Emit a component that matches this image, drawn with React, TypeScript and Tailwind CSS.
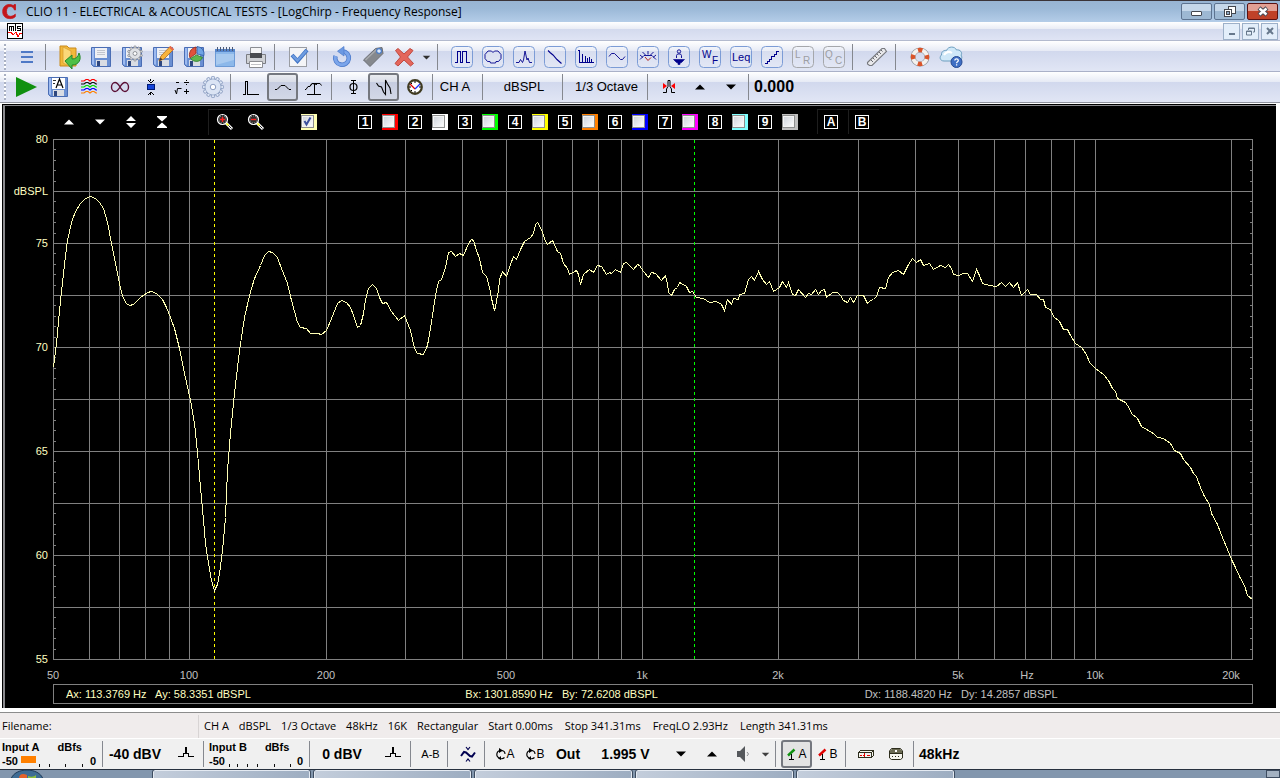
import React from "react";

type Kids = { children?: React.ReactNode };

const BAR =
  "flex items-center shrink-0 overflow-hidden border-b bg-[linear-gradient(180deg,#ffffff_0px,#e6eaf5_10px,#d1d8ed_10px,#e1e6f5_30px)]";

function Tool({ label, pressed, children }: Kids & { label: string; pressed?: boolean }) {
  return (
    <button
      type="button"
      aria-label={label}
      aria-pressed={pressed}
      className={
        "flex h-7 w-[31px] shrink-0 items-center justify-center rounded-[3px] " +
        (pressed ? "border-2 border-[#75787f] bg-black/5" : "")
      }
    >
      {children}
    </button>
  );
}

function Sep() {
  return <span className="ml-[2px] mr-[5px] h-[26px] w-px shrink-0 bg-[#85888f]" />;
}

function WideSep() {
  return <span className="ml-[3px] mr-2 h-[26px] w-px shrink-0 bg-[#85888f]" />;
}

function Grip() {
  return (
    <span className="mr-[5px] ml-1 h-[26px] w-[2px] shrink-0 bg-[repeating-linear-gradient(180deg,#a9b0c2_0px,#a9b0c2_2px,#ffffff_2px,#ffffff_4px)]" />
  );
}

function Art({ s = 24, crisp, children }: Kids & { s?: number; crisp?: boolean }) {
  return (
    <svg
      width={s}
      height={s}
      viewBox={`0 0 ${s} ${s}`}
      fill="none"
      stroke="none"
      className="shrink-0"
      shapeRendering={crisp ? "crispEdges" : "auto"}
      aria-hidden="true"
    >
      {children}
    </svg>
  );
}

function Boxed({ children, off }: Kids & { off?: boolean }) {
  return (
    <Art s={22}>
      <rect x="0.5" y="0.5" width="21" height="21" rx="4" fill="#ffffff" fillOpacity="0.15" stroke={off ? "#a5a7ab" : "#7c9cd6"} />
      <g stroke={off ? "#a5a7ab" : "#00008c"}>{children}</g>
    </Art>
  );
}

function Floppy({ children }: Kids) {
  return (
    <Art>
      <path d="M2.500 2.500h19v19h-17l-2-2z" fill="#6a8fd2" stroke="#4a6db4" />
      <path d="M3 3h2v17l-2-1z" fill="#9dbaf0" />
      <rect x="6" y="3" width="12" height="10" fill="#eff0f4" />
      <path d="M8 5.500h8M8 7.500h8M8 9.500h8" stroke="#c3c6ce" />
      <rect x="7" y="15" width="11" height="6" fill="#d9dce3" />
      <rect x="8" y="16" width="3" height="5" fill="#2f477e" />
      {children}
    </Art>
  );
}

function Cog({ cx, cy, r, n, fill, line }: { cx: number; cy: number; r: number; n: number; fill: string; line: string }) {
  const teeth = Array.from({ length: n }, (_, i) => (i * 360) / n);
  return (
    <g>
      {teeth.map((a) => (
        <rect
          key={a}
          x={cx - r * 0.15}
          y={cy - r}
          width={r * 0.3}
          height={r * 0.5}
          rx="0.8"
          fill={fill}
          stroke={line}
          strokeWidth="0.8"
          transform={`rotate(${a} ${cx} ${cy})`}
        />
      ))}
      <circle cx={cx} cy={cy} r={r * 0.76} fill={fill} stroke={line} strokeWidth="0.6" />
      <circle cx={cx} cy={cy} r={r * 0.26} fill="#ffffff" stroke={line} strokeWidth="0.9" />
    </g>
  );
}

function Up({ fill = "#000000" }: { fill?: string }) {
  return (
    <Art s={12}>
      <path d="M1 8.500L6 3.500l5 5z" fill={fill} />
    </Art>
  );
}

function Down({ fill = "#000000", s = 12 }: { fill?: string; s?: number }) {
  return (
    <svg width={s} height={s} viewBox="0 0 12 12" aria-hidden="true" className="shrink-0">
      <path d="M1 3.500L6 8.500l5-5z" fill={fill} />
    </svg>
  );
}

function TitleBar() {
  return (
    <header className="flex h-[22px] shrink-0 items-center border-t border-[#3a3338] bg-[linear-gradient(180deg,#98b4d3_0px,#9cb9d8_8px,#b4cde8_21px)] pr-[2px]">
      <svg width="20" height="20" viewBox="0 0 20 20" className="shrink-0" aria-hidden="true">
        <path d="M15.500 2.500v5.500h-1c-.8-2.400-2.300-3.500-4.200-3.500C7.700 4.500 6.500 6.300 6.500 9.400c0 3.200 1.500 4.900 4 4.900 1.800 0 3.400-.7 4.800-2.200v2.600c-1.400 1.300-3.200 1.900-5.400 1.900-4.400 0-7.200-2.700-7.200-7 0-4.200 2.700-7.100 6.700-7.100 1.500 0 2.800.4 3.900 1.100l.9-1.100z" fill="#c4151b" stroke="#c4151b" strokeWidth="0.8" />
      </svg>
      <h1 className="ml-[6px] min-w-0 flex-1 truncate font-['Open_Sans','Noto_Sans',sans-serif] text-xs leading-5 text-black">
        CLIO 11 - ELECTRICAL &amp; ACOUSTICAL TESTS - [LogChirp - Frequency Response]
      </h1>
      <div className="flex gap-[2px]">
        <button type="button" aria-label="Minimize" className="flex h-[17px] w-[31px] items-center justify-center rounded-[2px] border border-[#5d7390] bg-[linear-gradient(180deg,#c5d7ea_50%,#9db8d3_50%)]">
          <span className="mt-1 h-[5px] w-[11px] rounded-[1px] border border-[#44474f] bg-white" />
        </button>
        <button type="button" aria-label="Restore" className="flex h-[17px] w-[31px] items-center justify-center rounded-[2px] border border-[#5d7390] bg-[linear-gradient(180deg,#c5d7ea_50%,#9db8d3_50%)]">
          <svg width="12" height="12" viewBox="0 0 12 12" fill="#ffffff" stroke="#44474f" aria-hidden="true">
            <rect x="4.500" y="0.500" width="7" height="7" />
            <rect x="0.500" y="3.500" width="7" height="7" />
            <rect x="2.500" y="5.500" width="3" height="3" fill="#8fa8c4" />
          </svg>
        </button>
        <button type="button" aria-label="Close" className="flex h-[17px] w-[31px] items-center justify-center rounded-[2px] border border-[#5a1212] bg-[linear-gradient(180deg,#e2a094_50%,#bf4128_50%)]">
          <svg width="12" height="11" viewBox="0 0 12 11" aria-hidden="true">
            <path d="M2 2l8 7M10 2L2 9" stroke="#4b4b55" strokeWidth="4.400" />
            <path d="M2.500 2.500l7 6M9.500 2.500l-7 6" stroke="#ffffff" strokeWidth="2.400" />
          </svg>
        </button>
      </div>
    </header>
  );
}

function MenuBar() {
  const box = "flex h-[17px] w-[17px] items-center justify-center border border-[#9db0c8] bg-[#e3eefa]";
  return (
    <nav className="flex h-[19px] shrink-0 items-center justify-between border-b border-[#b3bace] bg-[linear-gradient(180deg,#ffffff_0px,#e9ecf5_7px,#d3daee_7px,#dfe4f4_18px)] pr-[2px] pl-[7px]">
      <svg width="16" height="16" viewBox="0 0 16 16" shapeRendering="crispEdges" aria-hidden="true">
        <rect x="0.500" y="0.500" width="15" height="15" fill="#ffffff" stroke="#000000" />
        <path d="M2.500 8V3.500h2V8M4.500 3.500h2V8M8.500 1v7M14 3.500h-3.500v2h3v2H10" stroke="#000000" fill="none" />
        <path d="M1 9.500h3l2 2 3-2 2 4 2-3h2" stroke="#ff0000" fill="none" />
      </svg>
      <div className="flex gap-[2px]">
        <button type="button" aria-label="Minimize document" className={box}>
          <span className="mt-[6px] h-[2px] w-[6px] bg-[#67788c]" />
        </button>
        <button type="button" aria-label="Restore document" className={box}>
          <svg width="9" height="9" viewBox="0 0 9 9" fill="none" stroke="#67788c" aria-hidden="true">
            <path d="M2.500 3V1h6v4H7M2.500 1.500h6" />
            <path d="M0.500 4h5v4h-5zM0.500 4.500h5" />
          </svg>
        </button>
        <button type="button" aria-label="Close document" className={box}>
          <svg width="8" height="8" viewBox="0 0 8 8" stroke="#67788c" strokeWidth="2" aria-hidden="true">
            <path d="M1 1l6 6M7 1L1 7" />
          </svg>
        </button>
      </div>
    </nav>
  );
}

const SMALL = { fontFamily: "Liberation Sans, Arial, sans-serif", stroke: "none" };

function MainToolbar() {
  return (
    <div role="toolbar" aria-label="Main" className={BAR + " h-[31px] border-[#aab1c8] pt-[2px]"}>
      <Grip />
      <Tool label="Menu">
        <Art s={14}>
          <path d="M1 2h12M1 7h12M1 12h12" stroke="#4f79c6" strokeWidth="2" />
        </Art>
      </Tool>
      <WideSep />
      <Tool label="Open">
        <Art>
          <path d="M2 1h7l2 2h7v18H2z" fill="#f2b93b" stroke="#c98a1d" />
          <path d="M5 2l8 4v16l-8-4z" fill="#fbd879" stroke="#d69a2b" strokeWidth="0.700" />
          <path d="M7 16l7-6v4c4 0 6-2 7-6 3 6 0 12-7 12v4z" fill="#4fc048" stroke="#22882a" />
        </Art>
      </Tool>
      <Tool label="Save"><Floppy /></Tool>
      <Tool label="Save settings">
        <Floppy><Cog cx={15} cy={8.5} r={7.5} n={10} fill="#dfe1e5" line="#85888f" /></Floppy>
      </Tool>
      <Tool label="Save as">
        <Floppy>
          <path d="M10 11L19 1.500l3.500 3L13 14l-5 2z" fill="#f8b33c" stroke="#b0691a" strokeWidth="0.800" />
          <path d="M18 2.500l1.500-1.500 3.500 3-1.500 2z" fill="#e5694b" />
          <path d="M8 16l1.500-3.500 2 2z" fill="#4a3a2a" />
        </Floppy>
      </Tool>
      <Tool label="Export">
        <Floppy>
          <path d="M15 9V1.500a7.500 7.500 0 0 1 7 9z" fill="#6fa3e4" stroke="#2d5ca6" strokeWidth="0.800" />
          <path d="M14 8.500L8 13C6 8 9 3 14 2z" fill="#e0523c" stroke="#912a1c" strokeWidth="0.800" />
          <path d="M14.500 10l6 2.500c-2 5-9 5-12 1z" fill="#5fb64f" stroke="#2c7a2a" strokeWidth="0.800" />
        </Floppy>
      </Tool>
      <Tool label="Notes">
        <Art>
          <path d="M2.500 4.500h19v17h-19z" fill="#8cb8ea" stroke="#6c9ad6" />
          <path d="M2 4h20v3H2z" fill="#5585cb" />
          <path d="M4.500 2v4M7.500 2v4M10.500 2v4M13.500 2v4M16.500 2v4M19.500 2v4" stroke="#4b5a78" />
          <path d="M3 9h18v6L3 20z" fill="#ffffff" opacity="0.250" />
        </Art>
      </Tool>
      <Tool label="Print">
        <Art>
          <path d="M6.500 2.500h11v7h-11z" fill="#f5f5f6" stroke="#8b8d92" />
          <path d="M2.500 9.500h19v9h-19z" fill="#cfd1d5" stroke="#7b7d83" />
          <path d="M6 8h12v5H6z" fill="#4a4c50" />
          <path d="M5.500 16.500h13v6h-13z" fill="#ffffff" stroke="#8b8d92" />
          <path d="M7 19.500h10" stroke="#c2c3c7" />
        </Art>
      </Tool>
      <WideSep />
      <Tool label="Options">
        <Art>
          <rect x="2.500" y="2.500" width="17" height="19" fill="#f4f5f7" stroke="#9a9da3" />
          <path d="M5 10l5.500 6L20 5" stroke="#3f73c4" strokeWidth="4" />
          <path d="M5.500 10.500l5 5L19.500 5.500" stroke="#6f9de0" strokeWidth="2.400" />
        </Art>
      </Tool>
      <WideSep />
      <Tool label="Reload">
        <Art s={22}>
          <path d="M4.500 10a6.800 6.800 0 1 0 7-4.800" stroke="#4e7ccc" strokeWidth="4.600" />
          <path d="M4.500 10a6.800 6.800 0 1 0 7-4.800" stroke="#7ba5ea" strokeWidth="3" />
          <path d="M13 0.500v9.500L6.500 5.200z" fill="#6c99e2" stroke="#4e7ccc" strokeWidth="0.700" />
        </Art>
      </Tool>
      <Tool label="Tag">
        <Art>
          <path d="M2.500 15L14.500 3.500l6.500-1 1 6L9 21.500z" fill="#85888d" stroke="#6b6e74" />
          <path d="M4.500 15L15.500 4.500" stroke="#a8aaae" strokeWidth="1.500" />
          <circle cx="18" cy="6" r="2.400" fill="#dfeafb" stroke="#4a7cc7" strokeWidth="1.200" />
        </Art>
      </Tool>
      <Tool label="Delete">
        <Art s={22}>
          <path d="M2.500 4.500L5 2.500 11 8l6-5.500 3 2L14.500 11l6 6.500-3 2.500-6.500-6-6 6L2 17.500 7.500 11z" fill="#e4665c" stroke="#c04a40" />
        </Art>
      </Tool>
      <button type="button" aria-label="More" className="flex h-7 w-[15px] shrink-0 items-center justify-center"><Down s={9} fill="#303030" /></button>
      <WideSep />
      <Tool label="MLS"><Boxed><path d="M4 16.500h2.500v-11h3v11h2v-11h4v11h3" shapeRendering="crispEdges" /></Boxed></Tool>
      <Tool label="Polar"><Boxed><path d="M11 6.500l1.500-1.500h3.500l3 3.500v4l-2.500 3h-2.500l-.5 1.500h-5l-.5-1.500H5.500L3 12.500v-4L6 5h3.500z" strokeWidth="0.900" strokeLinejoin="round" /></Boxed></Tool>
      <Tool label="FFT"><Boxed><path d="M3 16.500h3l1.500-3 2 3 1-2.500 1.500-9 2 9 1-2 1.500 4.500h2.500" strokeWidth="0.900" /></Boxed></Tool>
      <Tool label="Decay"><Boxed><path d="M4 4.500l2 2 3 2.500 4 4.500 4.500 4" strokeWidth="1.100" /></Boxed></Tool>
      <Tool label="Distortion"><Boxed><path d="M3 4.500h1.500v12H19M7.500 8v8M10.500 10v6M12.500 12v4M14.500 11v5M16.500 13v3" shapeRendering="crispEdges" /></Boxed></Tool>
      <Tool label="Sine"><Boxed><path d="M3 10.500l2.500-3h3l6 6h2l2.500-3" strokeWidth="0.900" /></Boxed></Tool>
      <Tool label="Meter">
        <Boxed>
          <path d="M3 13.500l4-4h8l4 4M5.500 6l3 3M11 5v3.500M16.500 6l-3 3M3 9l3 2.500M19 9l-3 2.500" strokeWidth="0.900" />
          <path d="M11 14.500L8 11M11 14.500l3-3" stroke="#b02020" />
        </Boxed>
      </Tool>
      <Tool label="Loudspeaker">
        <Boxed>
          <circle cx="11" cy="5.500" r="1.700" strokeWidth="0.900" />
          <path d="M8.500 12V9.500l1-1.500h3l1 1.500V12" strokeWidth="0.900" />
          <path d="M5.500 13.500h11l-3 3-1.500.5v1.500h-2V17L8.500 16.500z" fill="#00008c" strokeWidth="0.600" />
        </Boxed>
      </Tool>
      <Tool label="Wow and flutter"><Boxed><text x="3" y="12" fontSize="10" fill="#00008c" style={SMALL}>W</text><text x="13" y="18" fontSize="10" fill="#00008c" style={SMALL}>F</text></Boxed></Tool>
      <Tool label="Level"><Boxed><text x="2" y="15" fontSize="11" fill="#00008c" style={SMALL}>Leq</text></Boxed></Tool>
      <Tool label="Linearity"><Boxed><path d="M4 17.500h2.500v-2h2v-2h2v-3h3v-2h2v-3H18" shapeRendering="crispEdges" /></Boxed></Tool>
      <Tool label="Left right"><Boxed off><text x="3" y="12" fontSize="10" fill="#9c9ea3" style={SMALL}>L</text><text x="11" y="18" fontSize="10" fill="#9c9ea3" style={SMALL}>R</text></Boxed></Tool>
      <Tool label="Quality control"><Boxed off><text x="2" y="12" fontSize="10" fill="#9c9ea3" style={SMALL}>Q</text><text x="12" y="18" fontSize="10" fill="#9c9ea3" style={SMALL}>C</text></Boxed></Tool>
      <WideSep />
      <Tool label="Ruler">
        <Art>
          <path d="M2.500 17.500L17 3.500h2.500l2 3L7 20.500H4.500l-2-1.500z" fill="#e9e9ec" stroke="#77797e" strokeWidth="1.100" />
          <path d="M6 15l2 2M8 13l1.500 1.500M10 11l2 2M12 9l1.500 1.500M14 7l2 2M16 5l1.500 1.500" stroke="#67696e" />
        </Art>
      </Tool>
      <WideSep />
      <Tool label="Help">
        <Art s={22}>
          <circle cx="11" cy="11" r="7" stroke="#8c8f95" strokeWidth="5" />
          <circle cx="11" cy="11" r="7" stroke="#f3f1ee" strokeWidth="4" />
          <circle cx="11" cy="11" r="7" stroke="#d9542a" strokeWidth="4.400" strokeDasharray="4.400 6.595" strokeDashoffset="2.200" />
        </Art>
      </Tool>
      <Tool label="Online help">
        <Art>
          <path d="M5 16C1 16 0 12 2.500 10 2 6 6 5 7.500 5.500 9 1 16 1 17.500 5 21 4 24 8 22 10c2 3 0 6-3 6z" fill="#cfe8f8" stroke="#6e9fc0" />
          <path d="M5 10c2-3 5-4 8-2" stroke="#ffffff" strokeWidth="2" />
          <circle cx="17.500" cy="17" r="5.500" fill="#3f6fc4" stroke="#274b92" />
          <path d="M15.800 15.500c0-2.300 3.500-2.300 3.500 0 0 1.400-1.700 1.300-1.700 2.700M17.600 19.300v1.200" stroke="#ffffff" strokeWidth="1.300" />
        </Art>
      </Tool>
    </div>
  );
}

const waves = ["#ff0000", "#101010", "#00e000", "#0000ff", "#ff8000"];

function MeasureToolbar() {
  const txt = "h-7 shrink-0 text-center text-[13px] leading-7 whitespace-nowrap font-['Liberation_Sans',Arial,sans-serif] text-black";
  return (
    <div role="toolbar" aria-label="Measurement" className={BAR + " h-[31px] border-[#8f939e]"}>
      <Grip />
      <Tool label="Go"><Art><path d="M1 2l21 10-21 10z" fill="#109010" /></Art></Tool>
      <Tool label="Autosave">
        <Floppy>
          <rect x="6" y="3" width="13" height="11" fill="#ffffff" />
          <path d="M7 5.500h3M7 8.500h2" stroke="#303030" />
          <path d="M10 13l3.500-9L17 13M11.200 10h4.600" stroke="#000000" strokeWidth="1.200" />
        </Floppy>
      </Tool>
      <Tool label="Overlays">
        <Art s={18}>
          {waves.map((c, i) => (
            <path key={c} d={`M1 ${3 + i * 3}h3l2-1.5h2l2 1.5 2-1.5h2l2 1.500h1`} stroke={c} strokeWidth="1.200" />
          ))}
        </Art>
      </Tool>
      <Tool label="Loop">
        <Art s={20}>
          <path d="M10 10C8 6.500 6.500 5.500 5 5.500A3.500 4.500 0 0 0 5 14.500c1.500 0 3-1 5-4.500s3.500-4.500 5-4.500a3.500 4.500 0 0 1 0 9C13.500 14.500 12 13.500 10 10z" stroke="#5a0f34" strokeWidth="1.400" />
        </Art>
      </Tool>
      <Tool label="Center cursor">
        <Art s={18} crisp>
          <path d="M6 2l3 3 3-3M6 17l3-3 3 3M8.500 1v2M8.500 15v2" stroke="#000000" />
          <rect x="5.500" y="6.500" width="7" height="5" fill="#1544d8" stroke="#001a78" />
        </Art>
      </Tool>
      <Tool label="Math">
        <Art s={18}>
          <path d="M3 4.500h3M11 4.500h5M13.500 2v1M13.500 6v1M2 12l1.500 4 1-5.500h4M11 13.500h5M13.500 11v5" stroke="#000000" />
        </Art>
      </Tool>
      <Tool label="Settings"><Art><Cog cx={12} cy={12} r={10.5} n={12} fill="#dbe4f4" line="#8295bb" /></Art></Tool>
      <Sep />
      <Tool label="Impulse"><Art s={20} crisp><path d="M1 17.500h2.500v-13h2v13H17" stroke="#000000" /></Art></Tool>
      <Tool label="Frequency" pressed><Art s={20}><path d="M2 12.500h2l4-4h4l4 4h2" stroke="#000000" /></Art></Tool>
      <Tool label="Time"><Art s={20}><path d="M1 12.500h1l2-3h2l2-3h8l1.500 2M10.500 6v11M3 17.500h14M6 9l2-2.500 5 1" stroke="#000000" /></Art></Tool>
      <Sep />
      <Tool label="Phase"><Art s={18}><path d="M9.500 2v14M7 2.500h5M7 15.500h5" stroke="#000000" /><ellipse cx="9.500" cy="9" rx="3.500" ry="3.500" stroke="#000000" strokeWidth="1.200" /></Art></Tool>
      <Tool label="Step" pressed><Art s={20}><path d="M2.500 6l2 3 3 1 2 5 2 2.500V3l2 4 2.500 4 1 6" stroke="#000000" strokeWidth="1.100" /></Art></Tool>
      <Tool label="Clock">
        <Art s={18}>
          <circle cx="9" cy="9" r="6.800" fill="#ffffff" stroke="#3f3a20" strokeWidth="2.200" />
          <path d="M9 3v2M9 13v2M3 9h2M13 9h2M5 5l1 1M5 13l1-1" stroke="#000000" />
          <path d="M4 6l5 5" stroke="#e00000" strokeWidth="1.200" />
          <path d="M9 11l5-5" stroke="#1b2fff" strokeWidth="1.200" />
        </Art>
      </Tool>
      <Sep />
      <button type="button" className={txt + " w-[34px] mr-2"}>CH A</button>
      <Sep />
      <button type="button" className={txt + " w-[72px]"}>dBSPL</button>
      <Sep />
      <button type="button" className={txt + " w-[77px]"}>1/3 Octave</button>
      <Sep />
      <Tool label="Gate">
        <Art s={18}>
          <path d="M3 14.500h3.500V11L8 8.500v-6h2v6l1.500 2.500v3.500H15" stroke="#000000" />
          <path d="M3 5l4 3-4 3zM15 5l-4 3 4 3z" fill="#ff0000" />
        </Art>
      </Tool>
      <Tool label="Increase"><Up /></Tool>
      <Tool label="Decrease"><Down /></Tool>
      <Sep />
      <output className="font-['Liberation_Sans',Arial,sans-serif] text-base leading-7 font-bold text-black">0.000</output>
    </div>
  );
}

const overlays = [
  "bg-[#ff0000]",
  "bg-[#ffffff]",
  "bg-[#00ff00]",
  "bg-[#ffff00]",
  "bg-[#ff8000]",
  "bg-[#0000ff]",
  "bg-[#ff00ff]",
  "bg-[#80ffff]",
  "bg-[#c0c0c0]",
];

const checkStyle =
  "block size-[13px] appearance-none border border-[#8e8f8f] bg-[linear-gradient(135deg,#cdd2da,#ffffff)] shadow-[inset_0_0_0_1px_#f4f4f4]";
const keyStyle =
  "flex size-[14px] items-center justify-center border border-white font-['Liberation_Sans',Arial,sans-serif] text-xs leading-3 font-bold text-white";

function Lens({ sign }: { sign: string }) {
  return (
    <Art s={18}>
      <path d="M10 10l6 6" stroke="#ffffff" strokeWidth="3" />
      <path d="M10.500 10.500l5 5" stroke="#202020" strokeWidth="1" />
      <path d="M9.500 9.500l3 3" stroke="#ffff00" strokeWidth="1.400" />
      <circle cx="6.500" cy="6.500" r="5" fill="#000000" stroke="#ffffff" strokeWidth="1.200" />
      <circle cx="6.500" cy="6.500" r="3.600" fill="#303030" stroke="#c8c8c8" strokeWidth="0.800" strokeDasharray="1 1" />
      <path d={sign} stroke="#ff2020" strokeWidth="1.400" />
    </Art>
  );
}

function PlotControls() {
  return (
    <div className="flex h-[33px] shrink-0 items-center pb-[2px] pl-12">
      <Tool label="Shift up"><Up fill="#ffffff" /></Tool>
      <Tool label="Shift down"><Down fill="#ffffff" /></Tool>
      <Tool label="Expand"><Art s={12}><path d="M1 5l5-5 5 5zM1 7l5 5 5-5z" fill="#ffffff" /></Art></Tool>
      <Tool label="Compress"><Art s={12}><path d="M1 0h10v1L6 5.500 1 1zM1 12h10v-1L6 6.500 1 11z" fill="#ffffff" /></Art></Tool>
      <span className="w-[31px]" />
      <span className="flex h-[26px] items-center border-t border-l border-[#1e1e1e]"><Tool label="Zoom in"><Lens sign="M4 6.500h5M6.500 4v5" /></Tool></span>
      <Tool label="Zoom out"><Lens sign="M4 6.500h5" /></Tool>
      <span className="relative ml-[30px] block size-4 bg-[#ffffb4] pt-px">
        <input type="checkbox" defaultChecked aria-label="Main curve" className={checkStyle} />
        <svg width="11" height="11" viewBox="0 0 11 11" className="pointer-events-none absolute top-[2px] left-px" aria-hidden="true">
          <path d="M2.500 5l2 3.500L8.500 1.500" stroke="#3b4f9c" strokeWidth="2" fill="none" />
        </svg>
      </span>
      <div className="ml-[41px] flex gap-[10px]">
        {overlays.map((bg, i) => (
          <div key={bg} className="flex items-center gap-[10px]">
            <label htmlFor={`overlay-${i + 1}`} className={keyStyle}>{i + 1}</label>
            <span className={"block size-4 pt-px " + bg}>
              <input id={`overlay-${i + 1}`} type="checkbox" className={checkStyle} />
            </span>
          </div>
        ))}
      </div>
      <div className="ml-[19px] flex">
        {["A", "B"].map((k) => (
          <button key={k} type="button" className="flex h-[25px] w-[31px] items-center border-t border-l border-[#1e1e1e] pl-[6px]">
            <span className={keyStyle}>{k}</span>
          </button>
        ))}
      </div>
    </div>
  );
}

const trace =
  "0,228 3,204 7,161 12,116 14,101 18,83 22,72 27,64 32,59 37,57 42,59 46,63 50,69 54,83 58,104 64,134 67,149 70,159 73,164 76,166 80,165 87,158 94,153 98,152 103,154 109,160 113,168 117,178 121,189 126,209 131,234 137,261 141,284 144,313 147,348 150,381 152,404 155,424 158,441 160,448 161,451 164,445 166,434 169,411 172,378 174,331 177,294 181,254 186,211 191,178 196,156 201,139 207,126 211,116 215,112 219,113 224,118 228,129 234,144 238,161 244,183 247,188 253,189 257,194 264,194 268,195 273,191 278,179 284,164 288,161 293,163 297,168 300,176 304,188 307,186 310,174 312,160 315,149 319,145 323,149 326,158 329,164 333,163 338,172 345,181 351,176 353,181 357,191 361,209 364,214 370,215 374,206 377,189 382,156 385,142 388,140 392,128 395,113 398,112 402,117 406,114 410,116 415,104 418,100 420,101 423,111 426,119 429,133 433,137 436,148 438,159 441,171 442,167 445,151 446,140 449,132 453,137 456,128 460,117 463,120 467,110 471,102 477,98 480,94 482,85 484,83 486,86 489,93 492,102 494,105 499,101 504,112 507,114 510,124 514,129 516,135 523,131 525,135 527,145 530,135 536,130 540,133 544,126 548,127 553,135 556,133 558,134 562,130 567,133 570,124 573,123 577,127 580,130 584,125 586,126 590,132 595,138 598,133 602,134 608,141 612,136 614,144 615,153 618,156 621,150 624,148 626,143 633,147 636,153 639,152 643,158 650,159 656,163 663,162 668,165 671,171 674,160 678,165 680,159 685,160 686,155 691,154 695,140 698,137 701,141 705,132 709,140 713,145 716,142 720,152 726,148 729,142 733,148 735,143 739,155 742,156 745,150 752,158 755,154 758,155 762,150 765,155 768,151 771,150 773,158 779,153 784,153 787,156 790,161 794,163 797,158 800,163 804,156 810,156 814,164 817,161 820,160 823,157 826,148 832,149 835,138 839,133 845,131 850,135 855,125 859,119 863,123 867,120 870,126 876,124 880,130 887,126 892,128 895,125 898,129 900,135 905,136 910,134 914,134 919,142 923,130 926,136 929,144 936,146 943,147 948,143 952,147 956,143 960,148 964,143 968,156 974,150 977,155 983,155 987,160 990,160 992,168 997,170 1000,177 1006,182 1010,190 1014,190 1017,196 1022,204 1028,208 1033,215 1036,223 1042,229 1050,235 1055,241 1059,249 1062,252 1064,259 1072,263 1076,269 1078,274 1084,279 1088,287 1093,290 1100,294 1104,298 1110,299 1117,304 1121,311 1127,314 1130,320 1137,328 1140,334 1143,337 1147,348 1151,357 1156,365 1158,374 1164,385 1169,398 1174,410 1178,420 1182,428 1186,437 1191,446 1194,456 1199,460";

const fx = (hz: number) => Math.round(Math.log10(hz / 50) * 452.7);
const gridHz = [50, 60, 70, 80, 90, 100, 200, 300, 400, 500, 600, 700, 800, 900, 1000, 2000, 3000, 4000, 5000, 6000, 7000, 8000, 9000, 10000, 20000];
const yLabels: [number, string][] = [[0, "80"], [1, "dBSPL"], [2, "75"], [4, "70"], [6, "65"], [8, "60"], [10, "55"]];
const xLabels: [number, string][] = [[50, "50"], [100, "100"], [200, "200"], [500, "500"], [1000, "1k"], [2000, "2k"], [5000, "5k"], [7070, "Hz"], [10000, "10k"], [20000, "20k"]];

function Plot() {
  const ticks = Array.from({ length: 51 }, (_, i) => Math.round(i * 10.4));
  return (
    <div className="flex min-h-0 flex-1 flex-col pr-[23px] font-['Liberation_Sans',Arial,sans-serif] text-[11px]">
      <div className="flex min-h-0 flex-1">
        <div className="relative w-12 shrink-0 text-[#ffffc0]">
          {yLabels.map(([i, t]) => (
            <span key={t} className="absolute right-[5px] -translate-y-1/2 leading-4" style={{ top: `${i * 9.98}%` }}>{t}</span>
          ))}
        </div>
        <svg viewBox="0 0 1200 521" preserveAspectRatio="none" shapeRendering="crispEdges" className="h-full min-w-0 flex-1" role="img" aria-label="Frequency response">
          <g stroke="#808080" strokeWidth="1">
            {gridHz.map((f) => <path key={f} d={`M${fx(f) + 0.5} 0V521`} />)}
            <path d="M1199.500 0V521" />
            {Array.from({ length: 11 }, (_, i) => <path key={i} d={`M0 ${i * 52 + 0.5}H1200`} />)}
            {ticks.map((y) => <path key={y} d={`M0 ${y + 0.5}h3M1200 ${y + 0.5}h-3`} />)}
          </g>
          <path d="M161.500 1V520" stroke="#ffff00" strokeDasharray="3 3" />
          <path d="M641.500 1V520" stroke="#00ff00" strokeDasharray="3 3" />
          <polyline points={trace} transform="translate(0.5 0.5)" fill="none" stroke="#ffffb4" strokeWidth="1" />
        </svg>
      </div>
      <div className="relative ml-12 h-6 shrink-0 text-[#c0c0c0]">
        {xLabels.map(([f, t]) => (
          <span key={t} className="absolute top-[7px] -translate-x-1/2 leading-4" style={{ left: `${fx(f) / 12}%` }}>{t}</span>
        ))}
      </div>
      <div className="mb-1 ml-12 flex h-5 shrink-0 items-center border border-[#808080] leading-4 whitespace-pre text-[#ffffc0]">
        <span className="w-1/3 pl-3">Ax: 113.3769 Hz   Ay: 58.3351 dBSPL</span>
        <span className="w-1/3 pl-3">Bx: 1301.8590 Hz   By: 72.6208 dBSPL</span>
        <span className="w-1/3 pl-3 text-[#c0c0c0]">Dx: 1188.4820 Hz   Dy: 14.2857 dBSPL</span>
      </div>
    </div>
  );
}

function StatusBar() {
  const first = ["CH A", "dBSPL", "1/3 Octave", "48kHz", "16K", "Rectangular", "Start 0.00ms"];
  const rest = ["Stop 341.31ms", "FreqLO 2.93Hz", "Length 341.31ms"];
  return (
    <div className="flex h-[27px] shrink-0 items-center border-t border-b border-t-[#8c8c8c] border-b-white bg-[#f0ecec] pt-[2px] font-['Open_Sans','Noto_Sans',sans-serif] text-[11px] whitespace-nowrap text-black">
      <span className="flex h-full w-[199px] shrink-0 items-center border-r border-[#d8d4d4] pl-[2px]">Filename:</span>
      <span className="ml-[5px] flex gap-[10px]">{first.map((t) => <span key={t}>{t}</span>)}</span>
      <span className="ml-3 flex gap-3">{rest.map((t) => <span key={t}>{t}</span>)}</span>
    </div>
  );
}

function Level({ name, fill }: { name: string; fill?: boolean }) {
  return (
    <div className="flex w-[98px] shrink-0 flex-col text-[11px] leading-[14px] font-bold">
      <div className="flex gap-[18px]"><span>{name}</span><span>dBfs</span></div>
      <div className="flex items-center gap-[3px]">
        <span>-50</span>
        <svg viewBox="0 0 70 12" className="h-3 min-w-0 flex-1" shapeRendering="crispEdges" aria-hidden="true">
          {fill && <rect x="0" y="1" width="16" height="7" fill="#ff8000" />}
          <path d={fill ? "M19.500 9v3M30.500 9v3M47.500 9v3M65.500 9v3" : "M1.500 9v3M10.500 9v3M20.500 9v3M31.500 9v3M49.500 9v3M66.500 9v3"} stroke="#000000" />
        </svg>
        <span className="mr-[4px]">0</span>
      </div>
    </div>
  );
}

function Peak() {
  return <Art s={18} crisp><path d="M1 11.500h5.500v-3h2v-6h1v6h2v3H17" stroke="#000000" /></Art>;
}

function Cycle({ t }: { t: string }) {
  return (
    <span className="flex items-center text-xs">
      <Art s={12}>
        <path d="M6 2.500a4 4 0 0 0-1 7.500M7 2.500c3 0 4 2 4 3.500M6 10.500c2 .5 3.500 0 4.500-1" stroke="#000000" strokeWidth="1.100" />
        <path d="M5 0l4 2.500L5 5zM7 8l-3 2.500L7 12z" fill="#000000" />
      </Art>
      {t}
    </span>
  );
}

function Mic({ t, c }: { t: string; c: string }) {
  return (
    <span className="flex items-center text-xs">
      <Art s={12}>
        <path d="M2 7.500L8.500 1.500" stroke={c} strokeWidth="2.400" />
        <path d="M5.500 6v5M3 11.500h5" stroke="#000000" />
      </Art>
      {t}
    </span>
  );
}

function HardwareBar() {
  const big = "shrink-0 text-center text-sm font-bold whitespace-nowrap";
  return (
    <div role="toolbar" aria-label="Hardware" className="flex h-[30px] shrink-0 items-center overflow-hidden bg-[#f0f0f0] pl-[2px] font-['Liberation_Sans',Arial,sans-serif] text-black">
      <Level name="Input A" fill />
      <Sep />
      <output className={big + " w-[54px]"}>-40 dBV</output>
      <span className="w-2" />
      <Tool label="Peak A"><Peak /></Tool>
      <Sep />
      <Level name="Input B" />
      <Sep />
      <output className={big + " w-[54px]"}>0 dBV</output>
      <span className="w-2" />
      <Tool label="Peak B"><Peak /></Tool>
      <Sep />
      <button type="button" className="w-[29px] shrink-0 text-[11px]">A-B</button>
      <Sep />
      <button type="button" aria-label="Generator" className="flex w-[29px] shrink-0 justify-center">
        <Art s={18}>
          <path d="M2 11l3-4 2 .5 4 3.500 2 .5 3-4" stroke="#000050" strokeWidth="2" />
          <path d="M7 2l2 2.500L11 2M7 16.500L9 14l2 2.500" stroke="#000050" strokeWidth="1.200" />
        </Art>
      </button>
      <Sep />
      <button type="button" className="flex w-[29px] shrink-0 justify-center"><Cycle t="A" /></button>
      <button type="button" className="flex w-[31px] shrink-0 justify-center"><Cycle t="B" /></button>
      <span className={big + " w-9"}>Out</span>
      <output className={big + " w-[79px]"}>1.995 V</output>
      <Tool label="Lower output"><Down /></Tool>
      <Tool label="Raise output"><Up /></Tool>
      <Tool label="Speaker">
        <Art s={18}>
          <path d="M3 6h3l5-5v16l-5-5H3z" fill="#55585c" />
          <path d="M13 7l1.500 2L13 11" stroke="#8a8d91" />
        </Art>
      </Tool>
      <button type="button" aria-label="Speaker options" className="flex w-[15px] shrink-0 justify-center"><Down s={9} fill="#404040" /></button>
      <Sep />
      <Tool label="Phantom A" pressed><Mic t="A" c="#109010" /></Tool>
      <Tool label="Phantom B"><Mic t="B" c="#e00000" /></Tool>
      <Sep />
      <button type="button" aria-label="Meter" className="flex w-[29px] shrink-0 justify-center">
        <Art s={18} crisp>
          <path d="M1.500 7.500l2-2h13v5l-2 2h-13zM14.500 12V7.500H1.500M14.500 7.500l2-2" fill="#f6f6ee" stroke="#2d2d1c" />
          <path d="M3 10.500h2M6 10.500h1M10 10.500h3M7.500 8v4" stroke="#e00000" strokeWidth="1.400" />
        </Art>
      </button>
      <Tool label="Turntable">
        <Art s={18}>
          <path d="M2.500 6l2-2.500h9l2 2.500v7l-2 1.500h-9l-2-1.500z" fill="#f6f6ee" stroke="#2d2d1c" />
          <path d="M3 5.500L5 4h8l2 1.500V8H3z" fill="#6b6b52" />
          <path d="M3 8.500h12M5 11.500h1M8 11.500h1M11 11.500h1" stroke="#2d2d1c" />
          <path d="M8 6h2" stroke="#ffffff" strokeWidth="2" />
        </Art>
      </Tool>
      <Sep />
      <output className={big}>48kHz</output>
    </div>
  );
}

function Taskbar() {
  const lit = "h-full w-[157px] shrink-0 rounded-t-[2px] border-t border-r border-l border-[#e4eaf2] bg-[linear-gradient(90deg,#c3cddb,#9dadc1)] outline outline-[#3d4c60]";
  return (
    <footer className="flex h-[9px] shrink-0 overflow-hidden border-t border-[#27313f] bg-[#8296ad]">
      <div className="w-[153px] shrink-0 pl-[10px]">
        <svg width="34" height="8" viewBox="0 0 34 8" aria-hidden="true" className="block">
          <path d="M1 9C5-3 29-3 33 9z" fill="#3d6c94" stroke="#1f3a57" />
          <path d="M9 8c0-4 4-5 8-3v3z" fill="#e2622b" />
          <path d="M18 6c3 1 6 1 8-1v3h-8z" fill="#8cbf3f" />
        </svg>
      </div>
      <div className="flex min-w-0 flex-1 gap-1">
        <div className={lit} />
        <div className={lit} />
        <div className={lit} />
        <div className={lit} />
        <div className={lit} />
      </div>
      <div className="h-full w-[14px] shrink-0 border border-[#3d4c60] bg-[#a3b1c1]" />
    </footer>
  );
}

export default function App() {
  return (
    <div className="flex h-screen flex-col overflow-hidden bg-white">
      <TitleBar />
      <MenuBar />
      <MainToolbar />
      <MeasureToolbar />
      <main className="flex min-h-0 flex-1 flex-col bg-white pt-px pr-1 pb-1 pl-[2px]">
        <div className="flex min-h-0 flex-1 flex-col border-t border-l border-black">
          <div className="flex min-h-0 flex-1 flex-col border-t border-l-2 border-[#8a8a8e] bg-black">
            <PlotControls />
            <Plot />
          </div>
        </div>
      </main>
      <StatusBar />
      <HardwareBar />
      <Taskbar />
    </div>
  );
}
